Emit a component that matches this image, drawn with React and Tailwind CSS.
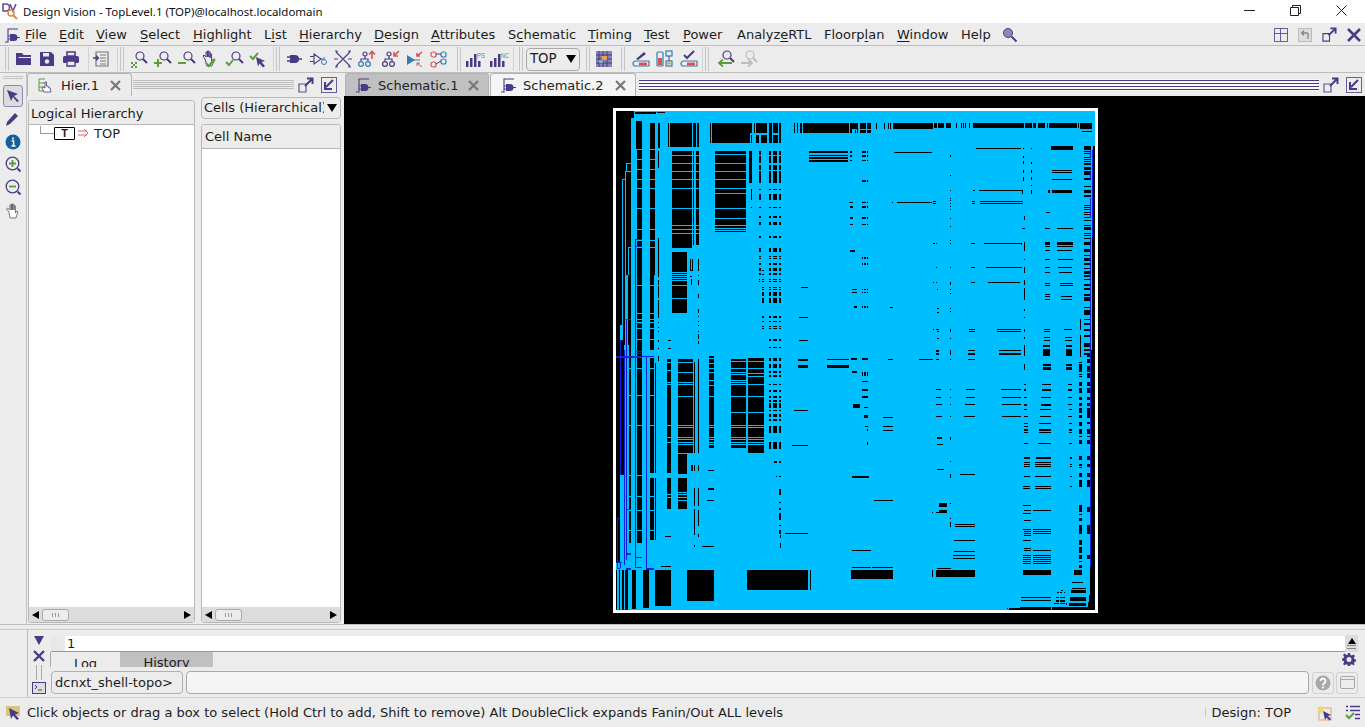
const PURPLE = '#4b3a85';
const GREEN = '#5a9e3a';
const RED = '#d9534f';
const BLUE = '#2f7fb5';

// chip layout rects are read off 3x crops, [x0, y0, x1, y1] in crop pixels
const crop = (ox, oy, list) => list.map(([a, b, c, d]) => [ox + a / 3, oy + b / 3, (c - a) / 3, (d - b) / 3]);
const grid = (cols, rows) => cols.flatMap(([a, c]) => rows.map(([b, d]) => [a, b, c, d]));
const lines = (a, c, ys, h = 3) => ys.map((y) => [a, y, c, y + h]);

const dashRowsTop = [[138, 150], [153, 175], [180, 195], [198, 234], [252, 255], [267, 285], [306, 309], [333, 339], [351, 360], [393, 399], [429, 441], [453, 456], [459, 462], [474, 480], [489, 498], [504, 510]];
const dashRowsLow = [[0, 3], [21, 24], [54, 63], [72, 84], [93, 99], [105, 111], [132, 135], [150, 156], [168, 174], [180, 186], [189, 204], [210, 213], [222, 231], [237, 243], [258, 279], [306, 327]];
const denseRight = [[123, 135], [138, 141], [144, 147], [156, 159], [162, 165], [168, 171], [174, 180], [186, 195], [198, 210], [219, 225], [243, 246], [255, 264], [270, 276], [300, 303], [306, 309], [312, 315], [321, 324], [327, 330], [336, 339], [345, 348], [360, 363], [366, 375], [384, 387], [390, 393], [399, 402], [411, 420], [432, 441], [450, 453], [459, 468], [474, 480], [489, 492], [498, 507], [510, 516], [522, 525], [537, 543], [549, 555], [567, 573], [576, 588], [606, 609], [615, 630], [642, 645], [654, 660], [672, 678], [690, 696], [714, 726], [732, 738], [744, 750]];
const colA = [[36, 39], [42, 66], [72, 75], [78, 81], [96, 108], [114, 129], [141, 150], [159, 168], [174, 189], [195, 204], [216, 228], [237, 252], [258, 261], [270, 282], [318, 330], [342, 348], [351, 354], [369, 381], [390, 411], [465, 486], [492, 495], [504, 513], [525, 552], [570, 585], [591, 609], [615, 627], [633, 636], [645, 654]];
const colB = [[9, 21], [27, 39], [48, 66], [69, 84], [96, 108], [114, 129], [141, 150], [159, 168], [174, 204], [216, 222], [237, 252], [258, 261], [270, 282], [318, 330], [342, 351], [369, 381], [390, 411], [471, 486], [525, 552], [615, 627]];

const black = [
  ...crop(610, 105, [
    [18, 18, 63, 510], [63, 18, 72, 40], [75, 21, 138, 27], [141, 21, 165, 24],
    [78, 48, 96, 132], [120, 54, 135, 132], [144, 54, 150, 130], [174, 54, 177, 126], [180, 54, 246, 126], [249, 54, 258, 126], [261, 54, 267, 126],
    [300, 54, 303, 114], [306, 54, 420, 114], [420, 54, 426, 84], [432, 54, 435, 84], [438, 54, 471, 84], [477, 54, 486, 114], [489, 54, 504, 84], [507, 54, 513, 114],
    [489, 90, 504, 114], [423, 90, 426, 114], [438, 90, 447, 114], [453, 90, 471, 114],
    [552, 54, 555, 84], [561, 54, 564, 84], [570, 54, 576, 84], [579, 54, 717, 84], [720, 54, 744, 72], [720, 72, 726, 84], [741, 72, 744, 84],
    [81, 135, 96, 510], [120, 135, 135, 510], [144, 138, 147, 190], [144, 400, 147, 510],
    [186, 138, 246, 430], [186, 441, 231, 495], [186, 498, 231, 510], [249, 138, 252, 420], [258, 138, 267, 420], [240, 462, 243, 498], [246, 462, 249, 498], [264, 462, 267, 498],
    [315, 138, 408, 382], [417, 138, 426, 234], [423, 252, 426, 285], [423, 306, 426, 309],
    ...grid([[447, 453], [477, 483], [489, 501], [507, 513]], dashRowsTop),
    [597, 138, 714, 144], [597, 150, 714, 153], [597, 156, 714, 162], [597, 165, 714, 171], [720, 138, 726, 144], [720, 150, 726, 156], [720, 165, 726, 168],
    [717, 291, 729, 294], [720, 303, 729, 309], [720, 336, 729, 342], [720, 357, 729, 360], [720, 435, 735, 441],
  ]),
  // band between the top and lower crops
  ...crop(610, 270, [
    [18, 0, 30, 225], [30, 0, 36, 165], [39, 0, 45, 225], [54, 0, 63, 225], [81, 0, 96, 225], [120, 0, 132, 225],
    [144, 0, 147, 20], [144, 30, 147, 45], [144, 48, 147, 85], [144, 90, 147, 145], [144, 155, 147, 160], [144, 170, 147, 175], [144, 183, 147, 186], [144, 210, 147, 216],
    [186, 0, 231, 129], [240, 0, 249, 3], [240, 18, 246, 21], [243, 27, 246, 45],
    ...grid([[264, 267]], [[0, 3], [15, 18], [30, 45], [72, 84], [117, 129], [138, 141], [153, 156], [165, 168], [183, 186], [192, 207], [213, 222]]),
    [174, 210, 183, 213],
    ...grid([[447, 450], [456, 462], [477, 483], [489, 501], [507, 513]], [[0, 3], [12, 15], [27, 30], [33, 36]]),
    ...grid([[456, 462], [477, 483], [489, 501], [507, 513]], [[51, 54], [57, 60], [66, 78], [84, 99], [138, 144], [153, 156], [168, 171], [174, 177]]),
    ...grid([[477, 483], [489, 501], [507, 513]], [[207, 213]]),
    [573, 51, 594, 54], [567, 141, 594, 144], [567, 210, 594, 213], [726, 57, 741, 60], [726, 66, 741, 69], [732, 108, 741, 114],
  ]),
  ...crop(610, 340, [
    [18, 0, 30, 665], [33, 0, 42, 405], [57, 0, 63, 610], [81, 0, 96, 610],
    [120, 0, 132, 30], [120, 55, 132, 400], [135, 70, 138, 400], [120, 414, 132, 600], [135, 414, 138, 600],
    [144, 0, 147, 6], [144, 24, 147, 27], [144, 48, 147, 63], [174, 0, 183, 3], [174, 24, 183, 27],
    [171, 57, 183, 400], [171, 414, 183, 507], [204, 57, 250, 340], [204, 342, 231, 402], [204, 414, 231, 507],
    [252, 66, 255, 340], [264, 57, 267, 340], [243, 375, 249, 393], [252, 375, 255, 393], [264, 375, 267, 393],
    [252, 444, 255, 498], [264, 444, 267, 498], [252, 507, 255, 585], [264, 510, 267, 558], [252, 615, 255, 621], [264, 582, 267, 591],
    [297, 48, 312, 325], [294, 390, 312, 393], [294, 444, 312, 450], [291, 480, 312, 483], [276, 618, 312, 621],
    [363, 57, 408, 325], [414, 54, 462, 340],
    ...grid([[477, 483], [489, 501], [507, 513]], dashRowsLow),
    [492, 363, 501, 369], [507, 363, 513, 369], [498, 408, 501, 411], [507, 408, 513, 411], [507, 447, 513, 465], [507, 486, 513, 489], [507, 504, 513, 510], [507, 519, 513, 540], [507, 555, 513, 558], [507, 570, 513, 582], [510, 585, 513, 594], [510, 609, 513, 624],
    [567, 0, 594, 3], [564, 57, 594, 63], [564, 75, 594, 84], [552, 210, 594, 213], [546, 315, 594, 318], [525, 579, 594, 582], [153, 678, 183, 681], [165, 588, 183, 591],
    [651, 57, 717, 60], [651, 75, 717, 84], [726, 54, 741, 60], [726, 93, 741, 99], [729, 192, 750, 204], [726, 408, 750, 414], [726, 630, 750, 633], [726, 681, 750, 684],
    [18, 690, 21, 810], [27, 690, 30, 810], [36, 690, 42, 810], [45, 690, 54, 810], [66, 690, 78, 807], [99, 690, 117, 804], [135, 690, 183, 798], [231, 690, 312, 783], [411, 690, 594, 750], [600, 690, 603, 750], [723, 690, 750, 717],
  ]),
  ...crop(850, 105, [
    [0, 54, 21, 69], [30, 54, 48, 72], [51, 54, 63, 72], [78, 54, 81, 72], [102, 54, 105, 72], [114, 54, 117, 72], [120, 54, 123, 72], [129, 54, 249, 72], [252, 54, 261, 69], [264, 54, 282, 69], [288, 54, 303, 69],
    [318, 54, 321, 69], [333, 54, 336, 69], [339, 54, 342, 69], [345, 54, 348, 69], [357, 54, 360, 69], [369, 54, 522, 69], [525, 54, 546, 69], [549, 54, 558, 69], [564, 54, 585, 69], [591, 54, 594, 69], [597, 54, 681, 69], [684, 54, 687, 69], [690, 54, 726, 72], [696, 78, 726, 81],
    [0, 72, 6, 84], [15, 75, 18, 84], [21, 75, 24, 84], [30, 75, 48, 84], [51, 75, 63, 84],
    ...grid([[0, 6], [36, 48], [51, 54]], [[138, 144], [150, 156], [165, 168], [291, 294], [303, 309], [336, 342], [357, 360]]),
    [36, 225, 48, 231], [51, 225, 54, 231], [0, 435, 15, 441],
    ...grid([[36, 39], [42, 48], [51, 54]], [[456, 462], [474, 480], [552, 555], [561, 564], [603, 609]]),
    [6, 552, 21, 555], [6, 561, 21, 564], [12, 603, 21, 609], [120, 606, 129, 609],
    [132, 141, 246, 144], [141, 291, 246, 294], [126, 291, 129, 294], [249, 288, 258, 291], [249, 294, 258, 297], [378, 129, 513, 132], [387, 255, 519, 258], [516, 258, 519, 267], [369, 255, 375, 258], [366, 288, 375, 291], [366, 294, 375, 297], [390, 288, 519, 291], [390, 293, 519, 297],
    [363, 414, 375, 417], [402, 414, 516, 417], [513, 417, 516, 420], [363, 486, 375, 489], [408, 486, 516, 489], [363, 531, 375, 534], [414, 531, 510, 534],
    [249, 414, 255, 417], [258, 414, 261, 417], [258, 486, 261, 489], [249, 531, 252, 534], [258, 531, 261, 534], [261, 552, 264, 555], [261, 609, 267, 612], [261, 621, 267, 624], [249, 672, 252, 675], [258, 672, 267, 675], [261, 678, 267, 681],
    [357, 672, 375, 675], [357, 678, 375, 681], [441, 672, 513, 675], [441, 678, 513, 681], [261, 699, 267, 702], [258, 735, 267, 741], [258, 744, 267, 750], [354, 735, 375, 738], [354, 744, 375, 750], [447, 735, 513, 738], [447, 744, 513, 750],
    ...grid([[300, 303]], [[150, 156], [210, 213], [255, 258], [279, 282], [285, 288], [294, 297], [303, 306], [312, 315], [339, 342], [363, 366], [405, 408], [414, 417], [486, 489], [531, 540], [552, 555], [564, 567], [609, 612], [618, 621], [672, 681], [699, 702], [735, 750]]),
    [519, 129, 522, 132], [519, 153, 522, 159], [519, 168, 522, 177], [519, 195, 522, 204], [519, 216, 522, 228], [522, 333, 525, 345], [516, 369, 525, 372], [522, 411, 525, 438], [522, 462, 525, 465], [522, 486, 525, 504], [522, 525, 525, 540], [522, 549, 525, 585], [522, 612, 525, 618], [522, 636, 525, 639], [522, 672, 525, 681], [522, 696, 525, 702], [522, 720, 525, 750],
    [543, 129, 546, 132], [543, 171, 546, 177], [543, 195, 546, 204], [543, 216, 546, 225], [543, 240, 546, 243], [543, 255, 546, 267],
    [603, 123, 669, 135], [606, 195, 666, 198], [606, 201, 666, 204], [606, 222, 666, 225], [594, 255, 600, 264], [606, 255, 666, 264], [588, 321, 600, 324], [585, 369, 600, 372], [621, 369, 669, 372], [585, 411, 600, 420], [621, 411, 669, 420], [585, 423, 600, 426], [621, 423, 669, 426], [585, 435, 600, 438], [621, 435, 666, 438],
    [585, 462, 600, 465], [624, 462, 669, 465], [585, 486, 600, 489], [624, 486, 666, 489], [585, 501, 600, 504], [627, 501, 666, 504], [585, 534, 600, 537], [585, 540, 600, 543], [630, 534, 669, 537], [630, 540, 669, 543], [585, 567, 600, 570], [585, 573, 600, 576], [585, 582, 600, 585], [633, 573, 666, 576], [633, 582, 666, 585],
    [582, 672, 600, 675], [582, 678, 600, 681], [642, 672, 666, 675], [582, 696, 600, 699], [582, 705, 600, 708], [645, 696, 666, 699], [645, 705, 666, 708], [579, 720, 600, 726], [648, 720, 666, 726], [579, 732, 600, 738], [648, 732, 666, 738], [579, 741, 600, 750], [648, 741, 666, 750],
    ...denseRight.map(([a, b]) => [702, a, 723, b]),
    [729, 123, 735, 396], [726, 396, 735, 750],
    [690, 642, 693, 675], [690, 690, 693, 750],
  ]),
  ...crop(850, 350, [
    [3, 24, 21, 30], [36, 24, 54, 30], [114, 27, 129, 30], [207, 27, 249, 30], [258, 0, 267, 6], [258, 9, 267, 15], [258, 27, 267, 30], [354, 0, 375, 3], [354, 9, 375, 15], [354, 27, 375, 30], [447, 0, 513, 3], [447, 9, 513, 15], [522, 0, 525, 18], [579, 0, 600, 18], [648, 0, 666, 18], [300, 0, 303, 15], [300, 27, 303, 30], [690, 0, 693, 21],
    [522, 42, 525, 60], [579, 42, 603, 48], [579, 51, 603, 60], [648, 42, 666, 48], [648, 51, 666, 60],
    [6, 63, 21, 69], [36, 66, 39, 78], [42, 66, 48, 78], [51, 66, 54, 78], [36, 93, 54, 96], [36, 117, 54, 123], [36, 138, 54, 144], [9, 162, 30, 174], [42, 171, 54, 174], [42, 195, 54, 204], [45, 228, 54, 231], [51, 237, 54, 243], [51, 276, 54, 285],
    [99, 201, 129, 204], [99, 228, 129, 231], [99, 240, 129, 243],
    [258, 117, 273, 120], [258, 141, 273, 144], [258, 162, 276, 165], [258, 198, 276, 201], [300, 117, 303, 120], [300, 141, 303, 144], [300, 162, 303, 165], [300, 198, 303, 201],
    [348, 117, 375, 120], [348, 141, 375, 144], [345, 162, 375, 165], [342, 198, 375, 201], [453, 117, 513, 120], [456, 141, 513, 144], [456, 162, 513, 165], [456, 198, 513, 201],
    [522, 102, 528, 105], [522, 117, 528, 123], [522, 141, 531, 144], [522, 162, 531, 168], [522, 177, 531, 180], [522, 198, 534, 201], [522, 219, 534, 222], [522, 228, 534, 231], [522, 237, 534, 243], [522, 246, 534, 249],
    [576, 102, 603, 105], [576, 117, 603, 123], [573, 141, 603, 144], [573, 162, 603, 168], [570, 177, 603, 180], [570, 198, 603, 201], [567, 219, 603, 222], [567, 237, 603, 243], [567, 246, 603, 249],
    [654, 102, 666, 105], [654, 117, 666, 123], [654, 141, 666, 144], [654, 162, 666, 165], [657, 177, 666, 180], [654, 198, 666, 201], [657, 219, 666, 222], [657, 237, 666, 243], [657, 246, 666, 249],
    [522, 279, 534, 282], [564, 279, 603, 282], [657, 279, 666, 282],
    [261, 261, 276, 267], [300, 261, 303, 270], [261, 282, 279, 285], [300, 333, 303, 336], [261, 357, 282, 360], [300, 372, 303, 384], [330, 372, 375, 375], [6, 378, 57, 384],
    [522, 321, 540, 327], [558, 321, 603, 327], [660, 321, 666, 327], [522, 336, 540, 339], [522, 342, 540, 345], [522, 348, 540, 351], [555, 336, 603, 339], [555, 342, 603, 345], [555, 348, 603, 351], [660, 342, 666, 345], [660, 348, 666, 351], [522, 378, 540, 381], [555, 378, 603, 381], [660, 378, 666, 381], [519, 408, 540, 411], [519, 414, 540, 417], [555, 408, 603, 411], [555, 414, 603, 417], [660, 408, 666, 411],
    [72, 450, 129, 453], [267, 459, 291, 471], [300, 459, 303, 462], [267, 480, 291, 489], [258, 486, 267, 489], [246, 486, 249, 489], [300, 504, 303, 507], [300, 516, 303, 531],
    [315, 522, 375, 525], [315, 528, 375, 531], [312, 570, 375, 573], [312, 603, 375, 606], [309, 615, 375, 618], [309, 624, 375, 627],
    [519, 465, 543, 468], [522, 480, 543, 483], [519, 489, 543, 492], [549, 480, 603, 483], [522, 510, 543, 513], [519, 537, 543, 540], [522, 543, 543, 546], [522, 549, 543, 552], [522, 555, 543, 558], [549, 537, 603, 540], [549, 543, 603, 546], [549, 549, 603, 552], [519, 570, 543, 573], [522, 594, 543, 597], [522, 600, 543, 603], [549, 600, 603, 603],
    ...lines(519, 543, [615, 621, 627, 633, 639]), ...lines(549, 603, [615, 621, 627, 633, 639]),
    [6, 600, 63, 603], [6, 651, 63, 654], [66, 651, 129, 654], [3, 660, 129, 687], [246, 660, 249, 681], [261, 654, 303, 657], [258, 660, 375, 681], [519, 660, 603, 675], [672, 660, 696, 675],
    ...colA.map(([a, b]) => [687, a, 696, b]),
    ...colB.map(([a, b]) => [711, a, 720, b]),
    [666, 696, 699, 699], [666, 714, 708, 717], [663, 720, 708, 729], [633, 720, 639, 723], [621, 726, 627, 729], [630, 726, 636, 729], [642, 726, 645, 729],
    [618, 741, 627, 744], [630, 741, 645, 744], [618, 750, 627, 756], [630, 750, 645, 756], [612, 759, 627, 762], [630, 759, 645, 762], [513, 741, 603, 744], [513, 750, 603, 753], [660, 741, 708, 753], [657, 759, 708, 768], [648, 759, 651, 765],
    [477, 774, 510, 780], [510, 771, 603, 780], [606, 771, 711, 780], [471, 774, 474, 777],
    [720, 0, 735, 780], [717, 735, 720, 780], [714, 756, 717, 780], [711, 770, 714, 780],
  ]),
];

const cyan = [
  ...crop(610, 105, [
    [36, 222, 39, 510], [45, 198, 48, 510], [48, 174, 51, 198], [48, 174, 63, 177], [45, 198, 63, 201], [36, 222, 45, 225], [54, 425, 57, 510], [54, 426, 78, 429],
    ...lines(78, 135, [162, 192, 222, 250, 310, 372, 405, 426]),
    ...lines(186, 267, [150, 175, 198, 222, 250, 310, 360, 372, 385]),
    ...lines(315, 408, [148, 175, 198, 222, 250, 264, 310, 340, 360, 368, 375]),
  ]),
  ...crop(610, 270, [
    [30, 165, 33, 225],
    ...lines(81, 132, [45, 130, 147, 155, 175, 208]),
    ...lines(186, 231, [6, 12, 18, 24, 30, 45, 84]),
  ]),
  ...crop(610, 340, [
    ...lines(57, 132, [84, 165, 255, 405, 468, 510, 570]),
    ...lines(171, 183, [66, 90, 125, 132, 255, 290, 305, 462, 470]),
    ...lines(204, 250, [66, 95, 125, 132, 168, 255, 262, 290, 297, 305, 312]),
    ...lines(204, 231, [455, 462, 470, 480]),
    ...lines(297, 312, [54, 70, 85, 95, 120, 135, 168, 255, 262, 290, 297, 305, 312]),
    ...lines(363, 408, [63, 84, 96, 102, 120, 125, 132, 168, 216, 255, 262, 290, 297, 305, 312]),
    ...lines(414, 462, [63, 84, 100, 108, 132, 168, 216, 256, 262, 290, 297, 305, 312]),
    [24, 690, 27, 810],
  ]),
];

const blue = [
  ...crop(610, 105, [[75, 402, 78, 510], [75, 402, 96, 405], [78, 423, 96, 426]]),
  ...crop(610, 270, [[75, 0, 78, 225], [48, 147, 51, 225], [48, 147, 63, 150], [78, 160, 96, 163]]),
  ...crop(610, 340, [
    [30, 0, 33, 405], [42, 30, 45, 675], [48, 0, 51, 660], [75, 0, 78, 684], [108, 51, 111, 687], [18, 48, 96, 54], [96, 48, 132, 51], [78, 33, 96, 36], [78, 39, 96, 42],
    [75, 682, 96, 684], [75, 651, 96, 654], [48, 507, 63, 510], [48, 639, 63, 645], [48, 684, 63, 690], [108, 684, 132, 690], [21, 534, 30, 537], [21, 534, 24, 684], [18, 666, 36, 669], [21, 684, 30, 687], [30, 669, 33, 684],
  ]),
  ...crop(850, 105, [[726, 135, 729, 396], [720, 135, 723, 160], [720, 200, 723, 225], [720, 280, 723, 340], [720, 396, 723, 750]]),
  ...crop(850, 350, [[720, 0, 723, 650]]),
];

const ChipLayout = () => (
  <svg width="479" height="499" viewBox="616 111 479 499" shapeRendering="crispEdges" className="block bg-[#00bfff]">
    {black.map((r, i) => <rect key={`k${i}`} x={r[0]} y={r[1]} width={r[2]} height={r[3]} fill="#000" />)}
    {cyan.map((r, i) => <rect key={`c${i}`} x={r[0]} y={r[1]} width={r[2]} height={r[3]} fill="#00bfff" />)}
    {blue.map((r, i) => <rect key={`b${i}`} x={r[0]} y={r[1]} width={r[2]} height={r[3]} fill="#0a22e0" />)}
  </svg>
);

const Svg = ({ s = 20, children, className = '' }) => (
  <svg width={s} height={s} viewBox="0 0 20 20" fill="none" className={`shrink-0 ${className}`}>{children}</svg>
);

const Mag = ({ cx = 12, cy = 7, r = 4, c = PURPLE }) => (
  <>
    <circle cx={cx} cy={cy} r={r} stroke={c} strokeWidth="1.2" />
    <path d={`M${cx + r - 1} ${cy + r - 1}l4 4`} stroke={c} strokeWidth="2" />
  </>
);

const Plug = ({ x = 0, y = 0 }) => (
  <g transform={`translate(${x} ${y})`}>
    <path d="M4 5h5a4 4 0 0 1 0 8H4z" fill={PURPLE} />
    <path d="M1 7h3M1 11h3M13 9h3" stroke={PURPLE} strokeWidth="1.4" />
  </g>
);

const Tree = ({ c = BLUE }) => (
  <>
    <circle cx="8" cy="5" r="2" stroke={PURPLE} strokeWidth="1.2" />
    <circle cx="4" cy="15" r="2.4" stroke={c} strokeWidth="1.2" />
    <circle cx="11" cy="15" r="2.4" stroke={c} strokeWidth="1.2" />
    <path d="M8 7v3M4 12v-2h7v2" stroke={PURPLE} strokeWidth="1.2" />
  </>
);

const Bars = ({ label }) => (
  <>
    <path d="M1 12h2.500v6H1zM5 9h2.500v9H5zM9 5h2.500v13H9zM13 12h2.500v6H13z" fill={PURPLE} />
    <text x="12" y="9" fontSize="6.500" fill={GREEN} fontFamily="Liberation Sans, sans-serif" textLength="8" lengthAdjust="spacingAndGlyphs">{label}</text>
  </>
);

const toolIcons = {
  folder: <><path d="M3 4h6l1.500 2H18v2H6L3 12z" fill={PURPLE} /><path d="M3 9h15v7H3z" fill={PURPLE} /></>,
  save: <><path d="M3 3h11l3 3v11H3z" fill={PURPLE} /><rect x="6" y="4" width="6" height="3.500" fill="#ececec" /><circle cx="10" cy="12.500" r="2.200" fill="#ececec" /></>,
  print: <><path d="M6 3h8v4H6z" stroke={PURPLE} strokeWidth="1.600" /><rect x="2" y="7" width="16" height="7" rx="1.500" fill={PURPLE} /><path d="M6 12h8v5H6z" fill="#ececec" stroke={PURPLE} strokeWidth="1.400" /></>,
  doc: <><path d="M4 3h12v14H4z" stroke="#777" strokeWidth="1.200" /><path d="M8 6h6M8 9h6M8 12h6M8 15h6" stroke="#777" /><path d="M1 9h5M4 6.500L6.500 9 4 11.500" stroke={PURPLE} strokeWidth="1.300" /></>,
  fit: <><Mag /><path d="M3 13h2v2H3zM7 13h2v2H7zM3 17h2v2H3zM7 17h2v2H7zM5 15h2v2H5z" fill={GREEN} /></>,
  plus: <><Mag /><path d="M6 10v8M2 14h8" stroke={GREEN} strokeWidth="2" /></>,
  minus: <><Mag /><path d="M2 14h8" stroke={GREEN} strokeWidth="2" /></>,
  hand: <><path d="M5 10l-2-3 1-1 2 2V3h1.400v5V2h1.400v6-5h1.400v6-4h1.400v7l2-2 1 1-3 6H7z" stroke={PURPLE} strokeWidth="1" /><path d="M6 14l2.500 3L15 10" stroke={GREEN} strokeWidth="2" /></>,
  magCheck: <><Mag /><path d="M2 13l3 3 4-5" stroke={GREEN} strokeWidth="2" /></>,
  checkArrow: <><path d="M2 7l3 3 5-6" stroke={GREEN} strokeWidth="2" /><path d="M8 8l9 4-3.500 1 3.500 4-2 1.500-3.500-4-1.500 3z" fill={PURPLE} /></>,
  cell: <Plug x="1" y="1" />,
  cellOut: <><path d="M5 5l7 5-7 5zM1 7.500h4M1 12.500h4M12 10h2" stroke={PURPLE} strokeWidth="1.100" /><circle cx="15" cy="13" r="2.500" stroke={BLUE} strokeWidth="1" /><path d="M15 8v3" stroke={BLUE} /></>,
  cross: <path d="M3 3l5 5M3 17l5-5M17 3l-5 5M17 17l-5-5M1 10h4M15 10h4M8 8l4 4M12 8l-4 4M2 2l2 0 0 2M18 2l-2 0 0 2M2 18l2 0 0-2M18 18l-2 0 0-2" stroke={PURPLE} strokeWidth="1.100" />,
  treeUp: <><Tree /><path d="M15 10V3M12 5.500L15 2.500l3 3" stroke={RED} strokeWidth="1.600" /></>,
  treeIn: <><Tree c={PURPLE} /><path d="M18 2l-5 5M13 3v4h4" stroke={RED} strokeWidth="1.600" /></>,
  buf: <><path d="M2 6l8 5-8 5z" fill={BLUE} /><path d="M2 11h13" stroke={BLUE} /><path d="M17 3l-5 4M12 4v3h3" stroke={RED} strokeWidth="1.600" /><path d="M17 18l-5-4M12 17v-3h3" stroke={RED} strokeWidth="1" /></>,
  net: <><rect x="2" y="3" width="5" height="5" rx="2" stroke={RED} strokeWidth="1.200" /><rect x="12" y="3" width="5" height="5" rx="2" stroke={BLUE} strokeWidth="1.200" /><rect x="2" y="13" width="5" height="5" rx="2" stroke={RED} strokeWidth="1.200" /><rect x="12" y="10" width="5" height="5" rx="2" stroke={BLUE} strokeWidth="1.200" /><path d="M7 5h5M7 15l5-3" stroke={PURPLE} /></>,
  ps: <Bars label="PS" />,
  nc: <Bars label="NC" />,
  grid: <><rect x="2" y="2" width="16" height="16" fill="#8b83b8" /><path d="M5 2v16M9 2v16M13 2v16M2 6h16M2 10h16M2 14h16" stroke={PURPLE} /><rect x="8" y="7" width="5" height="4" fill="#e8a04c" /><rect x="5" y="11" width="4" height="3" fill="#7fb0d6" /></>,
  editTray: <><path d="M2 15a3 3 0 0 1 3-3h13v5H3z" stroke={BLUE} strokeWidth="1.200" /><rect x="8" y="13.500" width="8" height="3" fill={RED} /><path d="M5 10l8-7 2 2-8 6z" fill={PURPLE} /></>,
  bars: <><rect x="2" y="3" width="6" height="14" rx="1" stroke={BLUE} strokeWidth="1.200" /><rect x="3" y="9" width="4" height="7" fill={RED} /><rect x="11" y="2" width="6" height="5" stroke={BLUE} strokeWidth="1.200" /><rect x="11" y="12" width="6" height="5" stroke={BLUE} strokeWidth="1.200" /><rect x="12" y="13.500" width="4" height="2" fill="#e8a04c" /><path d="M14 7v5" stroke={PURPLE} /></>,
  checkTray: <><path d="M2 15a3 3 0 0 1 3-3h13v5H3z" stroke={BLUE} strokeWidth="1.200" /><rect x="8" y="13.500" width="8" height="3" fill={RED} /><path d="M5 6l3 3 7-7" stroke={PURPLE} strokeWidth="2" /></>,
  back: <><Mag cx={12} cy={6} r={4} /><path d="M17 14H4M8 10.500L4 14l4 3.500" stroke={GREEN} strokeWidth="1.800" /></>,
  fwd: <><Mag cx={11} cy={6} r={4} c="#bdbdbd" /><path d="M2 14h11M9 10.500l4 3.500-4 3.500" stroke="#bdbdbd" strokeWidth="1.800" /></>,
};

const Tool = ({ name }) => (
  <div className="w-6 h-6 flex items-center justify-center">
    <Svg>{toolIcons[name]}</Svg>
  </div>
);

const Grip = ({ h = 'h-6' }) => <div className={`w-[4px] ${h} mx-[2px] shrink-0 border-x border-[#c4c4c4]`} />;
const Sep = () => <div className="w-px h-6 shrink-0 bg-[#d2d2d2]" />;

const Underlined = ({ text, at }) => (
  <span>{at < 0 ? text : <>{text.slice(0, at)}<span className="underline underline-offset-2">{text[at]}</span>{text.slice(at + 1)}</>}</span>
);

const menus = [
  ['File', 0, 'w-[34px]'], ['Edit', 0, 'w-[37px]'], ['View', 0, 'w-[44px]'], ['Select', 0, 'w-[53px]'], ['Highlight', 0, 'w-[71px]'], ['List', 1, 'w-[35px]'], ['Hierarchy', 0, 'w-[75px]'], ['Design', 0, 'w-[57px]'], ['Attributes', 0, 'w-[77px]'],
  ['Schematic', 1, 'w-[80px]'], ['Timing', 0, 'w-[56px]'], ['Test', 0, 'w-[39px]'], ['Power', 0, 'w-[54px]'], ['AnalyzeRTL', 6, 'w-[87px]'], ['Floorplan', 6, 'w-[73px]'], ['Window', 0, 'w-[64px]'], ['Help', -1, 'w-[41px]'],
];

const Tab = ({ icon, label, active, wide }) => (
  <div className={`h-[23px] flex items-center pl-[8px] shrink-0 rounded-t-[3px] border border-b-0 border-[#b4b4b4] ${wide} ${active ? 'bg-[#f4f4f4]' : 'bg-[#c0c0c0]'}`}>
    {icon}
    <span className="ml-[6px] pt-[1px] text-[13px] text-[#222]">{label}</span>
    <span className="ml-auto mr-[9px] w-[11px] h-[11px] flex items-center justify-center">
      <svg width="11" height="11" viewBox="0 0 11 11"><path d="M1 1l9 9M10 1l-9 9" stroke="#777" strokeWidth="2.200" /></svg>
    </span>
  </div>
);

const SchemIcon = () => (
  <svg width="18" height="18" viewBox="0 0 18 18" fill="none" className="shrink-0">
    <path d="M2 16h3V3h10" stroke={PURPLE} strokeWidth="1.100" />
    <path d="M7 8h4a3.500 3.500 0 0 1 0 7H7z" fill={PURPLE} />
    <path d="M5 10h2M5 13h2M14 11.500h3" stroke={PURPLE} strokeWidth="1.100" />
  </svg>
);

const PopOut = () => (
  <svg width="16" height="16" viewBox="0 0 16 16" fill="none" className="shrink-0">
    <path d="M1 7h7v8H1z" stroke={PURPLE} strokeWidth="1.200" opacity="0.85" />
    <path d="M7 9l7-7M9 1.500h5.500V7" stroke={PURPLE} strokeWidth="2" />
  </svg>
);

const DockIn = () => (
  <svg width="16" height="16" viewBox="0 0 16 16" fill="none" className="shrink-0">
    <rect x="0.5" y="0.5" width="15" height="15" stroke={PURPLE} opacity="0.8" />
    <path d="M12 3L5 10M4 5v7h7" stroke={PURPLE} strokeWidth="2" />
  </svg>
);

const ScrollBar = ({ thumb }) => (
  <div className="h-[15px] bg-[#dcdcdc] flex items-center justify-between px-[3px] rounded-b-[3px]">
    <span className="w-0 h-0 border-y-[4px] border-y-transparent border-r-[7px] border-r-black" />
    <div className={`${thumb} h-[12px] mr-auto ml-[3px] rounded-[3px] border border-[#aaa] bg-[#ececec] flex items-center justify-center gap-[2px]`}>
      <i className="w-px h-[4px] bg-[#999]" /><i className="w-px h-[4px] bg-[#999]" /><i className="w-px h-[4px] bg-[#999]" />
    </div>
    <span className="w-0 h-0 border-y-[4px] border-y-transparent border-l-[7px] border-l-black" />
  </div>
);

const RailBtn = ({ children, className = 'h-[23px]' }) => <div className={`w-full flex items-center justify-center ${className}`}>{children}</div>;

export default function App() {
  return (
    <div className="w-[1365px] h-[727px] overflow-hidden flex flex-col bg-[#ececec] text-[#1c1c1c] font-['DejaVu_Sans',sans-serif] text-[13px]">
      {/* title bar */}
      <div className="h-[23px] shrink-0 bg-white flex items-center pl-[2px]">
        <svg width="18" height="18" viewBox="0 0 18 18" fill="none" className="shrink-0">
          <path d="M1 1h3a3 3 0 0 1 0 7H1zM8 1l3 7 3-7" stroke="#5a4a90" strokeWidth="1.500" />
          <circle cx="9" cy="10" r="3" stroke="#e8843c" strokeWidth="1.500" />
          <path d="M11 12l4 4" stroke="#e8843c" strokeWidth="2" />
        </svg>
        <span className="ml-[3px] text-[11.5px] font-['Noto_Sans',sans-serif] text-[#111]">Design Vision - TopLevel.1 (TOP)@localhost.localdomain</span>
        <div className="ml-auto flex items-center pr-[1px] pb-[2px]">
          <div className="w-[46px] flex justify-center"><svg width="11" height="11" viewBox="0 0 11 11"><path d="M0 5.500h11" stroke="#222" /></svg></div>
          <div className="w-[46px] flex justify-center"><svg width="11" height="11" viewBox="0 0 11 11" fill="none"><path d="M.5 2.500h8v8h-8zM2.500 2.500v-2h8v8h-2" stroke="#222" /></svg></div>
          <div className="w-[46px] flex justify-center"><svg width="11" height="11" viewBox="0 0 11 11"><path d="M.5.5l10 10M10.500.5l-10 10" stroke="#222" /></svg></div>
        </div>
      </div>

      {/* menu bar */}
      <div className="h-[23px] shrink-0 flex items-center border-b border-[#bdbdbd] pl-[3px] pt-[1px]">
        <div className="w-[22px]"><SchemIcon /></div>
        {menus.map(([t, at, w]) => (
          <div key={t} className={`${w} shrink-0 whitespace-nowrap`}><Underlined text={t} at={at} /></div>
        ))}
        <svg width="16" height="16" viewBox="0 0 16 16" fill="none" className="shrink-0">
          <circle cx="6" cy="6" r="4.500" fill="#8f88b5" stroke={PURPLE} />
          <path d="M9.500 9.500l5 5" stroke={PURPLE} strokeWidth="2" />
        </svg>
        <div className="ml-auto flex items-center gap-[10px] pr-[4px]">
          <svg width="14" height="14" viewBox="0 0 14 14" fill="none"><path d="M.5.5h13v13H.5zM.5 5.500h13M6.500.5v13" stroke={PURPLE} opacity="0.8" /></svg>
          <svg width="14" height="14" viewBox="0 0 14 14" fill="none"><rect x=".5" y=".5" width="13" height="13" stroke="#bbb" fill="#ddd" /><path d="M10 5H4M6 2.500L3.500 5 6 7.500M10 5v6" stroke="#888" strokeWidth="1.300" /></svg>
          <svg width="15" height="15" viewBox="0 0 16 16" fill="none"><path d="M1 7h7v8H1z" stroke={PURPLE} strokeWidth="1.200" /><path d="M7 9l7-7M9 1.500h5.500V7" stroke={PURPLE} strokeWidth="2" /></svg>
          <svg width="14" height="14" viewBox="0 0 14 14"><path d="M1 1l12 12M13 1L1 13" stroke={PURPLE} strokeWidth="2.600" /></svg>
        </div>
      </div>

      {/* tool bar */}
      <div className="h-[27px] shrink-0 flex items-center border-b border-[#bdbdbd] pl-[3px]">
        <Grip />
        <Tool name="folder" /><Tool name="save" /><Tool name="print" />
        <div className="w-[5px]" /><Sep /><div className="w-[1px]" />
        <Tool name="doc" />
        <div className="w-[3px]" /><Sep />
        <Grip />
        <Tool name="fit" /><Tool name="plus" /><Tool name="minus" /><Tool name="hand" /><Tool name="magCheck" /><Tool name="checkArrow" />
        <div className="w-[3px]" /><Sep /><Grip />
        <div className="w-[1px]" />
        <Tool name="cell" /><Tool name="cellOut" /><Tool name="cross" /><Tool name="treeUp" /><Tool name="treeIn" /><Tool name="buf" /><Tool name="net" />
        <div className="w-[4px]" /><Grip />
        <Tool name="ps" /><Tool name="nc" />
        <div className="w-[2px]" /><Sep /><div className="w-[3px]" /><Grip />
        <div className="w-[1px]" />
        <div className="w-[54px] h-[23px] shrink-0 rounded-[4px] border border-[#aaa] flex items-center justify-between pl-[3px] pr-[3px]">
          <span className="text-[13.300px]">TOP</span>
          <span className="w-0 h-0 border-x-[5px] border-x-transparent border-t-[8px] border-t-black" />
        </div>
        <div className="w-[4px]" /><Grip />
        <Tool name="grid" />
        <div className="w-[3px]" /><Grip /><div className="w-[2px]" />
        <Tool name="editTray" /><Tool name="bars" /><Tool name="checkTray" />
        <div className="w-[1px]" /><Sep /><Grip /><div className="w-[2px]" />
        <Tool name="back" /><Tool name="fwd" />
      </div>

      {/* docks */}
      <div className="flex-1 min-h-0 flex">
        <div className="w-[27px] shrink-0 border-r border-[#c4c4c4] flex flex-col">
          <div className="mx-[3px] mt-[3px] h-[3px] border-y border-[#c4c4c4]" />
          <div className="mx-[3px] mt-[6px] h-[22px] rounded-[3px] border border-[#8d84b8] bg-[#dcdcdc] flex items-center justify-center">
            <svg width="14" height="14" viewBox="0 0 14 14"><path d="M1 1l11 4-4 2 5 5-2 1-4-5-2 4z" fill={PURPLE} /></svg>
          </div>
          <RailBtn className="h-[23px]"><svg width="16" height="16" viewBox="0 0 16 16"><path d="M1 15l1-4 8-9 3 3-8 8z" fill={PURPLE} /></svg></RailBtn>
          <RailBtn><svg width="16" height="16" viewBox="0 0 16 16"><circle cx="8" cy="8" r="7.500" fill="#14609c" /><path d="M8 3.500v2M6.500 7H8.500v5M6.500 12h4" stroke="#fff" strokeWidth="1.600" /></svg></RailBtn>
          <RailBtn><svg width="17" height="17" viewBox="0 0 17 17" fill="none"><circle cx="7.500" cy="7.500" r="6.300" stroke={PURPLE} strokeWidth="1.300" /><path d="M7.500 4v7M4 7.500h7" stroke={GREEN} strokeWidth="1.800" /><path d="M12.500 12.500l3 3" stroke={PURPLE} strokeWidth="2" /></svg></RailBtn>
          <RailBtn><svg width="17" height="17" viewBox="0 0 17 17" fill="none"><circle cx="7.500" cy="7.500" r="6.300" stroke={PURPLE} strokeWidth="1.300" /><path d="M4 7.500h7" stroke={GREEN} strokeWidth="1.800" /><path d="M12.500 12.500l3 3" stroke={PURPLE} strokeWidth="2" /></svg></RailBtn>
          <RailBtn><svg width="16" height="16" viewBox="0 0 16 16" fill="#fff"><path d="M4 9L1.500 6l1-1 2.500 2V2h1.300v5V1h1.400v6-5.500h1.400V7V3h1.300v7l1.500-2 1 1-2 6H5z" stroke="#555" strokeWidth=".8" /></svg></RailBtn>
        </div>

        <div className="w-[317px] shrink-0 flex flex-col">
          <div className="h-[23px] shrink-0 flex items-center">
            <div className="w-[105px] shrink-0 h-[23px] bg-[#ececec] rounded-t-[3px] border border-b-0 border-[#b4b4b4] flex items-center pl-[9px]">
              <svg width="16" height="16" viewBox="0 0 16 16" fill="none"><path d="M2 2h6M2 2v12M2 6h6M2 10h6M2 14h5" stroke={GREEN} /><path d="M7 15l-2-4 1-1 2 1V5h1.500v4h1.300v1h1.300v1h1.100l.8 4z" fill="#fff" stroke={PURPLE} strokeWidth=".8" /></svg>
              <span className="ml-[8px] pt-[1px] text-[13px]">Hier.1</span>
              <svg width="11" height="11" viewBox="0 0 11 11" className="ml-[11px]"><path d="M1 1l9 9M10 1l-9 9" stroke="#777" strokeWidth="2.200" /></svg>
            </div>
            <div className="ml-[1px] w-[161px] flex flex-col gap-[1px]">
              {[0, 1, 2, 3, 4].map((i) => <div key={i} className="h-px bg-[#bdbdbd]" />)}
            </div>
            <div className="ml-[4px] flex items-center gap-[7px]"><PopOut /><DockIn /></div>
          </div>
          <div className="flex-1 min-h-0 flex pl-[1px] pr-[3px] pb-[1px] pt-[1px] gap-[6px]">
            <div className="w-[167px] shrink-0 mt-[3px] flex flex-col border border-[#b8b8b8] rounded-[3px] bg-white overflow-hidden">
              <div className="h-[24px] shrink-0 bg-[#ececec] border-b border-[#b8b8b8] flex items-center pl-[2px] pt-[3px]">Logical Hierarchy</div>
              <div className="flex-1 min-h-0 flex items-start pl-[11px] pt-[1px]">
                <div className="w-[14px] h-[8px] border-l border-b border-[#999]" />
                <div className="w-[21px] h-[13px] mt-[1px] border border-black rounded-[1px] flex items-center justify-center text-[11px] font-bold leading-none font-['Liberation_Sans',sans-serif]">T</div>
                <svg width="13" height="10" viewBox="0 0 13 10" fill="none" className="ml-[2px] mt-[2px]"><path d="M1 3h9M1 7h9M7 1l4 4-4 4" stroke="#e0666a" /></svg>
                <span className="ml-[4px] -mt-[1px] leading-[17px]">TOP</span>
              </div>
              <ScrollBar thumb="w-[27px]" />
            </div>
            <div className="w-[140px] shrink-0 flex flex-col">
              <div className="h-[22px] shrink-0 border border-[#b8b8b8] rounded-[4px] flex items-center pl-[2px] overflow-hidden">
                <span className="flex-1 overflow-hidden whitespace-nowrap">Cells (Hierarchical)</span>
                <span className="mx-[3px] w-0 h-0 border-x-[5px] border-x-transparent border-t-[8px] border-t-black" />
              </div>
              <div className="flex-1 min-h-0 mt-[5px] flex flex-col border border-[#b8b8b8] rounded-[3px] bg-white overflow-hidden">
                <div className="h-[24px] shrink-0 bg-[#ececec] border-b border-[#b8b8b8] flex items-center pl-[3px] pt-[1px]">Cell Name</div>
                <div className="flex-1" />
                <ScrollBar thumb="w-[27px]" />
              </div>
            </div>
          </div>
        </div>

        <div className="flex-1 min-w-0 flex flex-col">
          <div className="h-[23px] shrink-0 flex items-center pl-[1px]">
            <Tab icon={<SchemIcon />} label="Schematic.1" wide="w-[144px]" />
            <div className="w-[1px]" />
            <Tab icon={<SchemIcon />} label="Schematic.2" active wide="w-[146px]" />
            <div className="ml-[3px] w-[680px] flex flex-col gap-[2px] bg-[#f8f8f8] py-[1px]">
              {[0, 1, 2, 3].map((i) => <div key={i} className="h-px bg-[#4b3a85]" />)}
            </div>
            <div className="ml-[4px] flex items-center gap-[7px]"><PopOut /><DockIn /></div>
          </div>
          <div className="flex-1 min-h-0 bg-black pl-[269px] pt-[12px]">
            <div className="w-[485px] border-[3px] border-white"><ChipLayout /></div>
          </div>
        </div>
      </div>

      {/* console */}
      <div className="h-[73px] shrink-0 flex flex-col border-t border-[#bdbdbd]">
        <div className="h-[5px] shrink-0 border-b border-[#c8c8c8]" />
        <div className="flex-1 min-h-0 flex">
          <div className="w-[28px] shrink-0 border-r border-[#bdbdbd]" />
          <div className="w-[22px] shrink-0 flex flex-col items-center">
            <span className="mt-[6px] w-0 h-0 border-x-[5px] border-x-transparent border-t-[9px] border-t-[#4b3a85]" />
            <svg width="12" height="12" viewBox="0 0 12 12" className="mt-[5px]"><path d="M1 1l10 10M11 1L1 11" stroke={PURPLE} strokeWidth="2.400" /></svg>
            <div className="mt-[3px] h-[15px] w-[6px] border-x border-[#aaa]" />
            <svg width="14" height="12" viewBox="0 0 14 12" fill="none" className="mt-[2px]"><rect x=".5" y=".5" width="13" height="11" stroke={PURPLE} fill="#ddd" /><path d="M3 3l2 2-2 2M6 8h4" stroke={PURPLE} /></svg>
          </div>
          <div className="flex-1 min-w-0 flex flex-col pl-[1px] pr-[7px] pt-[6px]">
            <div className="h-[16px] shrink-0 flex items-stretch border-b border-[#999] pr-[13px]">
              <div className="flex-1 bg-white flex items-center leading-none">
                <div className="w-[14px] h-full bg-[#e8e8e8]" />
                <span className="ml-[2px]">1</span>
              </div>
              <div className="relative w-0">
                <div className="absolute left-0 -top-[1px] w-[13px] h-[17px] bg-[#dcdcdc] flex flex-col items-center">
                  <span className="mt-[3px] w-0 h-0 border-x-[4px] border-x-transparent border-b-[6px] border-b-black" />
                  <i className="w-[9px] h-px bg-[#888] mt-[1px]" /><i className="w-[9px] h-px bg-[#888] mt-[2px]" />
                </div>
              </div>
            </div>
            <div className="h-[15px] shrink-0 -ml-[1px] flex overflow-hidden">
              <div className="w-[70px] flex justify-center pt-[2px] border-l border-[#aaa]">Log</div>
              <div className="w-[93px] flex justify-center bg-[#c0c0c0] pt-[1px]">History</div>
              <svg width="14" height="14" viewBox="0 0 14 14" className="ml-auto mr-[2px] shrink-0" fill={PURPLE}><path d="M6 1h2l.4 2 1.500.6L11.600 2.500 13 4l-1.200 1.700.5 1.300 1.900.5v2l-1.900.4-.5 1.400L13 12l-1.400 1.300-1.700-1.100-1.500.6L8 14H6l-.4-1.200-1.500-.6-1.700 1.100L1 12l1.200-1.600-.5-1.400L0 8.500v-2L1.700 6l.5-1.300L1 3l1.400-1.400 1.700 1.100L5.600 3zM7 5a2.500 2.500 0 1 0 0 5 2.500 2.500 0 0 0 0-5z" /></svg>
            </div>
            <div className="h-[23px] mt-[4px] shrink-0 flex items-center">
              <div className="w-[132px] h-[23px] border border-[#b0b0b0] rounded-[4px] flex items-center pl-[3px] shrink-0">dcnxt_shell-topo&gt;</div>
              <div className="ml-[3px] flex-1 h-[23px] border border-[#a8a8a8] rounded-[4px] bg-[#f5f5f5]" />
              <div className="ml-[3px] w-[22px] h-[22px] border border-[#d0d0d0] rounded-[3px] flex items-center justify-center">
                <svg width="16" height="16" viewBox="0 0 16 16"><circle cx="8" cy="8" r="7.500" fill="#a8a8a8" /><path d="M5.500 6a2.500 2.500 0 1 1 4 2c-1 .7-1.500 1-1.500 2.500" stroke="#fff" strokeWidth="1.800" fill="none" /><circle cx="8" cy="12.600" r="1" fill="#fff" /></svg>
              </div>
              <div className="ml-[2px] w-[22px] h-[22px] border border-[#d0d0d0] rounded-[3px] flex items-center justify-center">
                <svg width="15" height="13" viewBox="0 0 15 13" fill="none"><rect x=".5" y=".5" width="14" height="12" rx="1.500" stroke="#a8a8a8" /><path d="M.5 3.500h14" stroke="#a8a8a8" /></svg>
              </div>
            </div>
          </div>
        </div>
      </div>

      {/* status bar */}
      <div className="h-[30px] shrink-0 border-t border-[#d0d0d0] flex items-center pl-[5px] pr-[4px]">
        <svg width="16" height="16" viewBox="0 0 16 16" className="shrink-0">
          <rect x="1" y="1" width="14" height="10" fill="#d8c57a" />
          <path d="M4 3l10 5-4 1.500 4 4-2 1.500-4-4.500L6 14z" fill={PURPLE} />
        </svg>
        <span className="ml-[6px] whitespace-nowrap">Click objects or drag a box to select (Hold Ctrl to add, Shift to remove) Alt DoubleClick expands Fanin/Out ALL levels</span>
        <div className="ml-auto w-px h-[9px] bg-[#c8c8c8]" />
        <span className="ml-[6px] whitespace-nowrap">Design: TOP</span>
        <svg width="16" height="16" viewBox="0 0 16 16" fill="none" className="ml-[25px] shrink-0">
          <rect x="3" y="3" width="12" height="12" stroke="#e8a070" />
          <path d="M1 2l3 1 1-3 1 3 2-1-1 3 2 1-3 .5-.5 2.500L4 7 1 7l2-2z" fill="#f2d66b" />
          <path d="M7 6l8 4-3 1 3 3-1.500 1.500-3-3L9 15z" fill={PURPLE} />
        </svg>
        <svg width="16" height="16" viewBox="0 0 16 16" fill="none" className="ml-[13px] shrink-0">
          <path d="M1 1.500h2M5 1.500h10M1 5.500h2M5 5.500h10M10 9.500h5M10 13.500h5" stroke={PURPLE} strokeWidth="1.600" />
          <path d="M1 10l3 3 5-5" stroke={GREEN} strokeWidth="2" />
        </svg>
      </div>
    </div>
  );
}
